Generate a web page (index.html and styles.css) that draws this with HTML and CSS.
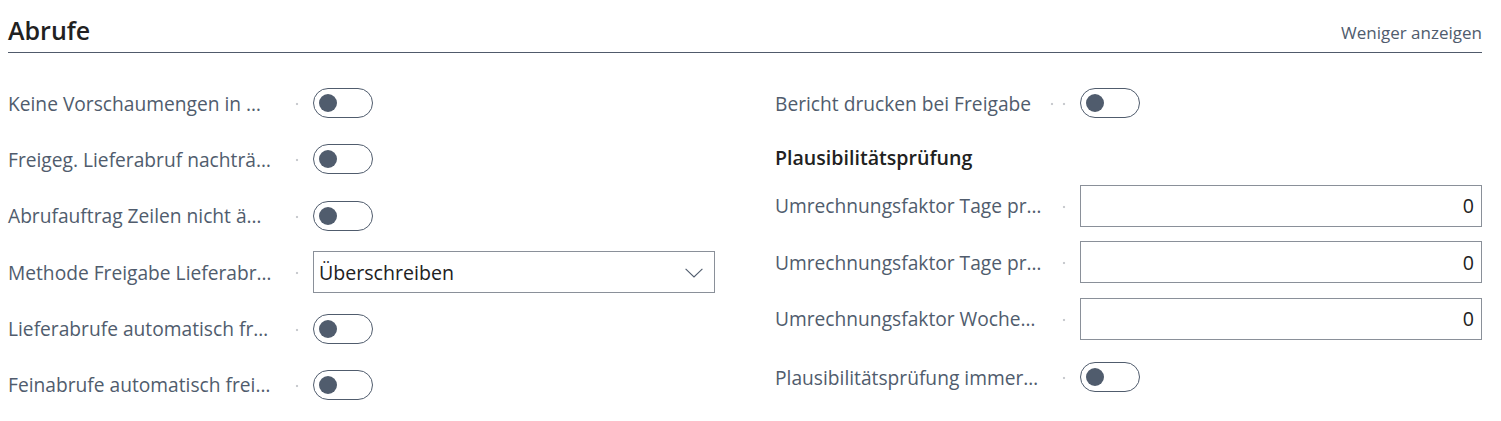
FILE: index.html
```html
<!DOCTYPE html>
<html lang="de">
<head>
<meta charset="utf-8">
<title>Abrufe</title>
<link rel="stylesheet" href="styles.css">
</head>
<body>
<section class="group">
  <header class="group-head">
    <h2 class="group-title">Abrufe</h2>
    <a class="group-toggle" href="#">Weniger anzeigen</a>
  </header>
  <div class="cols">
    <div class="col">
      <div class="row"><span class="label">Keine Vorschaumengen in …</span><span class="leader"></span><span class="toggle"><span class="knob"></span></span></div>
      <div class="row"><span class="label">Freigeg. Lieferabruf nachträ…</span><span class="leader"></span><span class="toggle"><span class="knob"></span></span></div>
      <div class="row"><span class="label">Abrufauftrag Zeilen nicht ä…</span><span class="leader"></span><span class="toggle"><span class="knob"></span></span></div>
      <div class="row"><span class="label">Methode Freigabe Lieferabr…</span><span class="leader"></span>
        <div class="select"><span class="select-text">Überschreiben</span>
          <svg class="chev" width="18" height="10" viewBox="0 0 18 10"><path d="M0.6 0.8 L9 9 L17.4 0.8" fill="none" stroke="#505c6d" stroke-width="1.1"/></svg>
        </div>
      </div>
      <div class="row"><span class="label">Lieferabrufe automatisch fr…</span><span class="leader"></span><span class="toggle"><span class="knob"></span></span></div>
      <div class="row"><span class="label">Feinabrufe automatisch frei…</span><span class="leader"></span><span class="toggle"><span class="knob"></span></span></div>
    </div>
    <div class="col">
      <div class="row"><span class="label">Bericht drucken bei Freigabe</span><span class="leader leader-two"></span><span class="toggle"><span class="knob"></span></span></div>
      <div class="row row-head"><span class="subhead">Plausibilitätsprüfung</span></div>
      <div class="row"><span class="label">Umrechnungsfaktor Tage pr…</span><span class="leader"></span><div class="input">0</div></div>
      <div class="row"><span class="label">Umrechnungsfaktor Tage pr…</span><span class="leader"></span><div class="input">0</div></div>
      <div class="row"><span class="label">Umrechnungsfaktor Woche…</span><span class="leader"></span><div class="input">0</div></div>
      <div class="row row-last"><span class="label">Plausibilitätsprüfung immer…</span><span class="leader"></span><span class="toggle"><span class="knob"></span></span></div>
    </div>
  </div>
</section>
</body>
</html>
```

FILE: styles.css
```css
html, body {
  margin: 0;
  padding: 0;
  background: #ffffff;
}
body {
  font-family: "Segoe UI", "Open Sans", "Noto Sans", sans-serif;
  color: #505c6d;
}
.group {
  padding: 0 19px 0 8px;
}
.group-head {
  display: flex;
  align-items: center;
  justify-content: space-between;
  box-sizing: border-box;
  height: 53px;
  border-bottom: 1px solid #505a6b;
}
.group-title {
  margin: 0;
  font-size: 25px;
  font-weight: 600;
  color: #212121;
  padding-top: 8px;
}
.group-toggle {
  font-size: 17px;
  color: #505c6d;
  text-decoration: none;
  padding-top: 12px;
}
.cols {
  display: grid;
  grid-template-columns: 707px 707px;
  column-gap: 60px;
  padding-top: 29px;
}
.col {
  display: flex;
  flex-direction: column;
  gap: 14.4px;
}
.row {
  display: flex;
  align-items: center;
  height: 42px;
}
.row-head {
  height: 32.2px;
  align-items: flex-end;
}
.row-last {
  margin-top: 2px;
}
.label {
  font-size: 19.2px;
  white-space: nowrap;
  flex: 0 1 auto;
  min-width: 0;
}
.leader {
  flex: 1;
  min-width: 8px;
  height: 4px;
  margin: 2px 14px 0 4px;
  background-image: radial-gradient(circle at 10px 50%, #c9cbcf 1.1px, transparent 1.6px);
  background-size: 12px 4px;
  background-position: right center;
  background-repeat: no-repeat;
}
.leader-two {
  background-repeat: repeat-x;
  max-width: 24px;
  margin-left: auto;
}
.subhead {
  font-size: 19.6px;
  font-weight: 600;
  color: #212121;
  line-height: 26px;
}
.toggle {
  flex: none;
  width: 60px;
  height: 30px;
  box-sizing: border-box;
  border: 1px solid #505c6d;
  border-radius: 15px;
  display: flex;
  align-items: center;
  padding-left: 5px;
  margin-right: 342px;
}
.knob {
  width: 18px;
  height: 18px;
  border-radius: 50%;
  background: #505c6d;
}
.select, .input {
  flex: none;
  width: 402px;
  height: 42px;
  box-sizing: border-box;
  border: 1px solid #8a9099;
  display: flex;
  align-items: center;
  font-size: 19.6px;
  color: #212121;
}
.select {
  padding: 0 11px 0 5px;
  justify-content: space-between;
}
.input {
  justify-content: flex-end;
  padding-right: 7px;
}
.chev {
  display: block;
  margin-top: 2px;
}
```
